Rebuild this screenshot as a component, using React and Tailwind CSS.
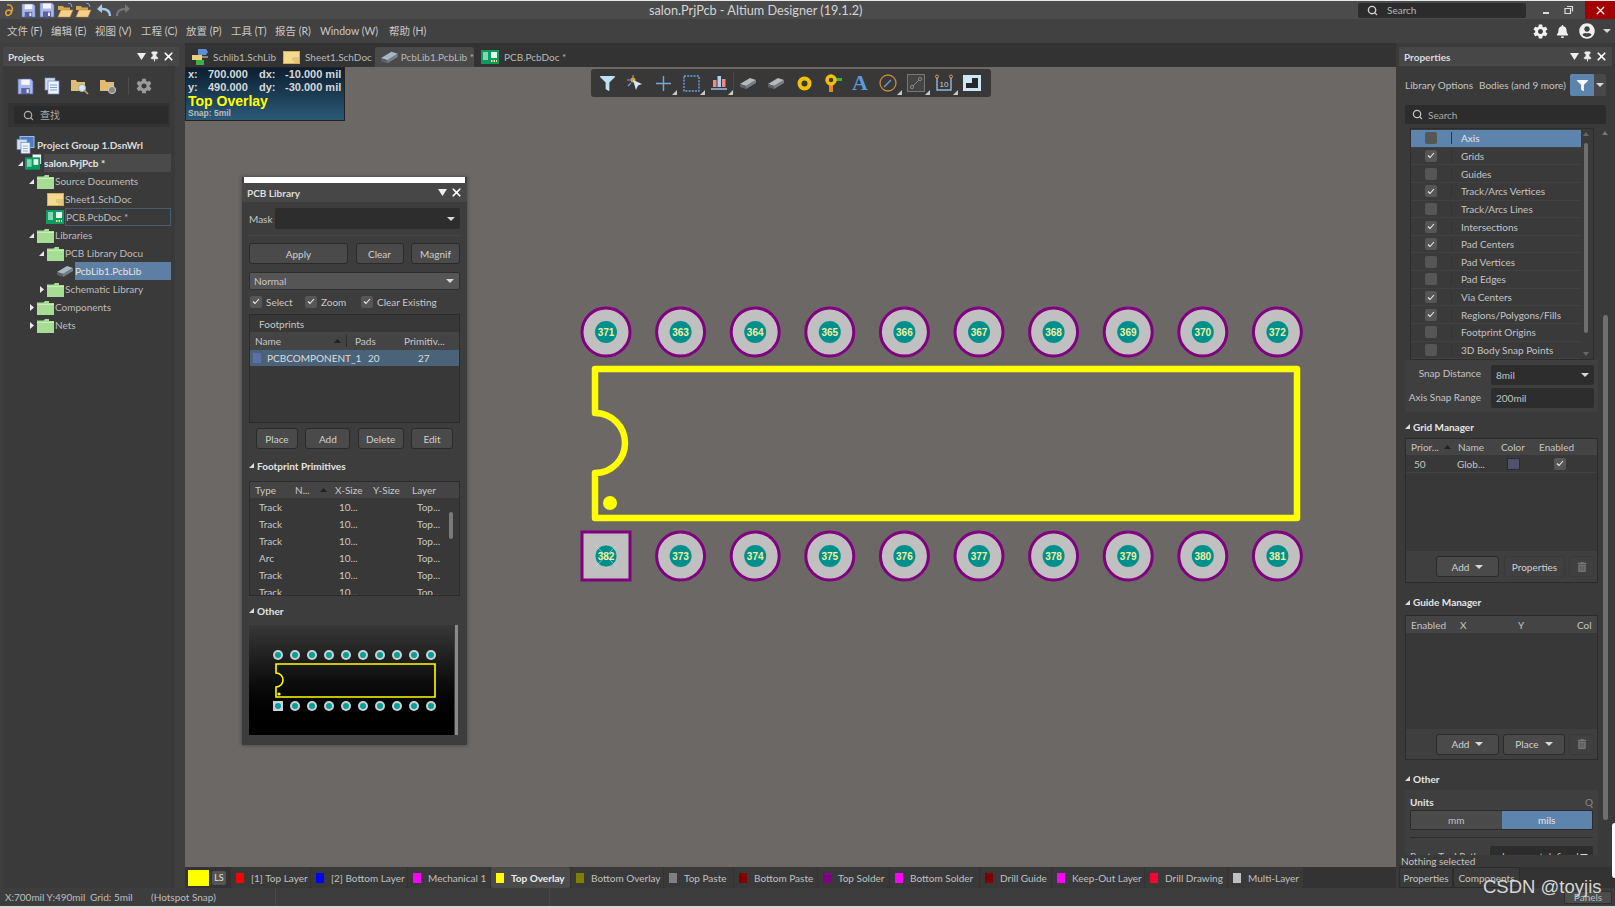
import { Search, X, Pin } from "lucide-react";
import { FaBell, FaFilter, FaTrashAlt, FaUserCircle } from "react-icons/fa";
import { IoMdSettings } from "react-icons/io";

const font = "font-['Lato','Noto_Sans_CJK_SC',sans-serif]";

const menus = [
  ["文件 (F)", "w-[44px]"],
  ["编辑 (E)", "w-[44px]"],
  ["视图 (V)", "w-[46px]"],
  ["工程 (C)", "w-[45px]"],
  ["放置 (P)", "w-[45px]"],
  ["工具 (T)", "w-[44px]"],
  ["报告 (R)", "w-[45px]"],
  ["Window (W)", "w-[69px]"],
  ["帮助 (H)", "w-[50px]"],
];

const layers = [
  ["[1] Top Layer", "bg-[#ff0000]", "w-[79px]"],
  ["[2] Bottom Layer", "bg-[#0000ff]", "w-[96px]"],
  ["Mechanical 1", "bg-[#ff00ff]", "w-[82px]"],
  ["Top Overlay", "bg-[#ffff00]", "w-[79px]"],
  ["Bottom Overlay", "bg-[#808000]", "w-[92px]"],
  ["Top Paste", "bg-[#808080]", "w-[69px]"],
  ["Bottom Paste", "bg-[#800000]", "w-[83px]"],
  ["Top Solder", "bg-[#800080]", "w-[71px]"],
  ["Bottom Solder", "bg-[#ff00ff]", "w-[89px]"],
  ["Drill Guide", "bg-[#800000]", "w-[71px]"],
  ["Keep-Out Layer", "bg-[#ff00ff]", "w-[92px]"],
  ["Drill Drawing", "bg-[#ff0033]", "w-[82px]"],
  ["Multi-Layer", "bg-[#c0c0c0]", "w-[75px]"],
];

const snapRows = [
  ["Axis", false],
  ["Grids", true],
  ["Guides", false],
  ["Track/Arcs Vertices", true],
  ["Track/Arcs Lines", false],
  ["Intersections", true],
  ["Pad Centers", true],
  ["Pad Vertices", false],
  ["Pad Edges", false],
  ["Via Centers", true],
  ["Regions/Polygons/Fills", true],
  ["Footprint Origins", false],
  ["3D Body Snap Points", false],
];

const primitives = ["Track", "Track", "Track", "Arc", "Track", "Track"];
const topPads = [371, 363, 364, 365, 366, 367, 368, 369, 370, 372];
const bottomPads = [382, 373, 374, 375, 376, 377, 378, 379, 380, 381];

function Caret({ className = "" }) {
  return (
    <svg width="8" height="4" viewBox="0 0 8 4" className={className}>
      <path d="M0 0h8L4 4z" fill="#d8d8d8" />
    </svg>
  );
}

function CornerArrow() {
  return (
    <svg width="5" height="5" viewBox="0 0 5 5" className="absolute right-0 bottom-0">
      <path d="M5 0v5H0z" fill="#c8c8c8" />
    </svg>
  );
}

function SortMark() {
  return (
    <svg width="7" height="4" viewBox="0 0 7 4">
      <path d="M0 4h7L3.5 0z" fill="#222" />
    </svg>
  );
}

function Floppy({ size = 16, color = "#aab6ea" }) {
  return (
    <svg width={size} height={size} viewBox="0 0 16 16">
      <path d="M1 1h12l2 2v12H1z" fill={color} stroke="#5f6bb0" strokeWidth="0.6" />
      <rect x="4" y="1.5" width="8" height="5" fill="#f4f5fb" />
      <rect x="4" y="9.5" width="8" height="5.5" fill="#59629c" />
      <rect x="9" y="10.5" width="2" height="3.5" fill="#e6e8f5" />
    </svg>
  );
}

function OpenFolder({ size = 17 }) {
  return (
    <svg width={size} height={size} viewBox="0 0 17 17">
      <path d="M1 4h5l1 1.5h6V8H1z" fill="#d9a94f" />
      <path d="M1 15l3-7h12l-3 7z" fill="#f5d08a" stroke="#b98a3a" strokeWidth="0.5" />
      <path d="M11 1l3 1 1 3" fill="none" stroke="#7aa7d8" strokeWidth="1" />
    </svg>
  );
}

function GreenFolder() {
  return (
    <svg width="17" height="15" viewBox="0 0 17 15">
      <path d="M0 2.5h6.5L8 1h4v2h5v12H0z" fill="#a6dc93" />
      <path d="M0 4.5h17" stroke="#c7eebb" strokeWidth="1" />
    </svg>
  );
}

function SheetIcon({ w = 17, h = 13 }) {
  return (
    <svg width={w} height={h} viewBox="0 0 17 13">
      <rect x="0.5" y="0.5" width="16" height="12" fill="#f6d98c" stroke="#cfae61" />
      <path d="M9 9h7M11 11h5M9 7h7" stroke="#bda35f" strokeWidth="0.7" />
    </svg>
  );
}

function PcbIcon({ w = 18, h = 14 }) {
  return (
    <svg width={w} height={h} viewBox="0 0 18 14">
      <rect width="18" height="14" fill="#0f9a62" />
      <rect x="2" y="2" width="5" height="8" fill="#7fd9b0" />
      <rect x="10" y="2" width="6" height="6" fill="#e6f5ee" />
      <path d="M10 11h6" stroke="#f2e56b" strokeWidth="2" strokeDasharray="1.5 1" />
    </svg>
  );
}

function PrjIcon() {
  return (
    <svg width="19" height="18" viewBox="0 0 19 18">
      <path d="M8 0h9v10H8z" fill="#f0f4fa" />
      <rect y="3" width="16" height="13" fill="#0f9a62" />
      <rect x="2" y="5" width="5" height="8" fill="#7fd9b0" />
      <rect x="9" y="5" width="5" height="6" fill="#e6f5ee" />
    </svg>
  );
}

function GroupIcon() {
  return (
    <svg width="19" height="18" viewBox="0 0 19 18">
      <rect x="4" y="0.5" width="14" height="11" fill="#4c7cc4" stroke="#9dbbe6" />
      <rect x="1" y="3.5" width="10" height="10" fill="#cfdcf0" stroke="#7f95c0" strokeWidth="0.6" />
      <rect x="5" y="6.5" width="9" height="11" fill="#eef3fb" stroke="#6f8cc0" strokeWidth="0.7" />
      <path d="M7 10h5M7 12.5h5M7 15h5" stroke="#7aa0d6" strokeWidth="0.8" />
    </svg>
  );
}

function SchLibIcon() {
  return (
    <svg width="16" height="16" viewBox="0 0 16 16">
      <path d="M6 0h8l2 3-2 3H6z" fill="#5b8fd8" />
      <rect x="0" y="6" width="10" height="5" fill="#e8d27a" />
      <path d="M10 8h6" stroke="#ddd" strokeWidth="1" />
      <rect x="4" y="11" width="8" height="5" fill="#3fae4a" />
    </svg>
  );
}

function ChipIcon({ w = 18, h = 14, color = "#a9b6c4" }) {
  return (
    <svg width={w} height={h} viewBox="0 0 18 14">
      <path d="M1 8l10-6 6 2-10 6z" fill={color} />
      <path d="M1 8l6 2v3l-6-2z" fill="#59616b" />
      <path d="M7 10l10-6v3L7 13z" fill="#767f8a" />
    </svg>
  );
}

function Arrow({ open }) {
  return (
    <svg width="7" height="7" viewBox="0 0 7 7" className="shrink-0">
      {open ? <path d="M6 1v5H1z" fill="#e8e8e8" /> : <path d="M2 0l4 3.5L2 7z" fill="#e8e8e8" />}
    </svg>
  );
}

function Check({ checked, className = "" }) {
  return (
    <span className={`flex h-[12px] w-[12px] shrink-0 items-center justify-center rounded-[2px] bg-[#565656] ${className}`}>
      {checked ? (
        <svg width="8" height="7" viewBox="0 0 8 7">
          <path d="M1 3.5l2 2L7 1" fill="none" stroke="#eee" strokeWidth="1.1" />
        </svg>
      ) : null}
    </span>
  );
}

function Btn({ className = "", children }) {
  return (
    <div className={`flex items-center justify-center gap-[6px] rounded-[3px] border border-[#2a2a2a] bg-[#4a4a4a] text-[#d0d0d0] ${className}`}>
      {children}
    </div>
  );
}

function SectionTitle({ className = "", children }) {
  return (
    <div className={`flex items-center gap-[3px] font-bold text-[#e4e4e4] ${className}`}>
      <svg width="5" height="5" viewBox="0 0 5 5">
        <path d="M5 0v5H0z" fill="#ddd" />
      </svg>
      {children}
    </div>
  );
}

function PanelHead({ title, pin = true, className = "" }) {
  return (
    <div className={`flex h-[19px] items-center bg-[#474747] pr-[4px] pl-[5px] font-bold text-[#dcdcdc] ${className}`}>
      <span className="flex-1">{title}</span>
      <svg width="9" height="7" viewBox="0 0 9 7" className="mr-[3px]">
        <path d="M0 0h9L4.5 7z" fill="#eee" />
      </svg>
      {pin ? <Pin size={11} fill="#eee" color="#eee" className="mr-[2px]" /> : null}
      <X size={13} color="#fff" strokeWidth={3.2} />
    </div>
  );
}

function TitleBar() {
  return (
    <div className="relative flex h-[19px] shrink-0 items-center border-t border-[#e8e8e8] bg-[#4b4b4b]">
      <div className="flex w-[140px] items-center pl-[5px]">
        <svg width="9" height="15" viewBox="0 0 9 15" className="mr-[7px]">
          <path d="M2 2c4-1 6 2 5 6s-5 6-6 3 2-5 5-3" fill="none" stroke="#e0a23a" strokeWidth="1.6" />
        </svg>
        <span className="mr-[3px]"><Floppy size={15} /></span>
        <span className="mr-[2px]"><Floppy size={16} /></span>
        <span className="mr-[1px]"><OpenFolder /></span>
        <span className="mr-[4px]"><OpenFolder /></span>
        <svg width="16" height="14" viewBox="0 0 16 14" className="mr-[3px]">
          <path d="M14 13c0-5-3-7-8-7H3" fill="none" stroke="#a9c8ee" strokeWidth="2.4" />
          <path d="M6 1L1 6l5 4z" fill="#a9c8ee" />
        </svg>
        <svg width="16" height="14" viewBox="0 0 16 14">
          <path d="M2 13c0-5 3-7 8-7h3" fill="none" stroke="#777" strokeWidth="2" />
          <path d="M10 1l5 5-5 4z" fill="#777" />
        </svg>
      </div>
      <div className="absolute left-[649px] text-[12.7px] text-[#d4d4d4]">salon.PrjPcb - Altium Designer (19.1.2)</div>
      <div className="ml-auto flex items-center">
        <div className="flex h-[15px] w-[168px] items-center rounded-[2px] bg-[#2c2c2c] pl-[9px] text-[#b8b8b8]">
          <Search size={11} color="#d0d0d0" strokeWidth={3} className="mr-[9px]" />
          Search
        </div>
        <div className="flex w-[40px] justify-center pt-[5px]">
          <div className="h-[2px] w-[6px] bg-[#ddd]" />
        </div>
        <svg width="10" height="10" viewBox="0 0 10 10" className="mr-[11px] ml-[-2px]">
          <path d="M3 1.5h5.5v5M1 3.5h5.5v5H1z" fill="none" stroke="#ddd" strokeWidth="1.2" />
        </svg>
        <div className="flex h-[18px] w-[30px] items-center justify-center bg-[#a50000]">
          <X size={13} color="#fff" strokeWidth={2.4} />
        </div>
      </div>
    </div>
  );
}

function MenuBar() {
  return (
    <div className="flex h-[24px] shrink-0 items-center bg-[#414141] pl-[7px] text-[10.5px] text-[#c8c8c8]">
      {menus.map(([label, width]) => (
        <span key={label} className={`${width} whitespace-nowrap`}>{label}</span>
      ))}
      <div className="ml-auto flex items-center pr-[4px]">
        <IoMdSettings size={17} color="#f0f0f0" className="mr-[7px]" />
        <FaBell size={13} color="#f0f0f0" className="mr-[10px]" />
        <FaUserCircle size={16} color="#f0f0f0" className="mr-[8px]" />
        <Caret />
      </div>
    </div>
  );
}

function TreeRow({ indent, arrow, icon, label, labelClass = "" }) {
  return (
    <div className={`flex h-[18px] items-center ${indent}`}>
      <span className="flex w-[10px] shrink-0 justify-center">
        {arrow ? <Arrow open={arrow === "open"} /> : null}
      </span>
      <span className="flex w-[18px] shrink-0 justify-center">{icon}</span>
      <span className={`ml-[1px] flex h-full flex-1 items-center overflow-hidden whitespace-nowrap ${labelClass}`}>{label}</span>
    </div>
  );
}

function LeftPanel() {
  return (
    <div className="flex h-full w-[185px] shrink-0 flex-col bg-[#3f3f3f] pt-[4px]">
      <PanelHead title="Projects" className="ml-[3px] w-[176px]" />
      <div className="ml-[3px] flex w-[172px] flex-1 flex-col bg-[#3a3a3a] pt-[10px]">
        <div className="flex h-[20px] items-center gap-[10px] pl-[14px]">
          <Floppy size={17} />
          <svg width="16" height="18" viewBox="0 0 16 18">
            <rect x="1" y="1" width="10" height="12" fill="#cdd9ee" stroke="#7f95c0" strokeWidth="0.6" />
            <rect x="4" y="4" width="11" height="13" fill="#eef3fb" stroke="#6f8cc0" strokeWidth="0.7" />
            <path d="M6 8h7M6 10.5h7M6 13h7" stroke="#7aa0d6" />
          </svg>
          <svg width="19" height="17" viewBox="0 0 19 17">
            <path d="M1 2h5l1 2h8v9H1z" fill="#e3bc74" />
            <circle cx="12" cy="10" r="3.6" fill="#d6e6f4" stroke="#9ab" />
            <path d="M14.5 12.5L18 16" stroke="#c9a35b" strokeWidth="1.6" />
          </svg>
          <svg width="19" height="17" viewBox="0 0 19 17">
            <path d="M1 2h5l1 2h8v9H1z" fill="#e3bc74" />
            <circle cx="13" cy="12" r="3.6" fill="#888" stroke="#ccc" />
          </svg>
          <div className="h-[18px] w-px bg-[#4c4c4c]" />
          <IoMdSettings size={18} color="#9b9b9b" className="-ml-[4px]" />
        </div>
        <div className="mx-[5px] mt-[7px] h-[24px] bg-[#333] pt-[3px] pr-[2px] pl-[6px]">
          <div className="flex h-[18px] items-center rounded-[2px] bg-[#2b2b2b] pl-[9px] text-[#a8a8a8]">
            <Search size={11} color="#b0b0b0" strokeWidth={2.6} className="mr-[6px]" />
            查找
          </div>
        </div>
        <div className="mt-[8px] flex flex-col pr-[4px] text-[#bdbdbd]">
          <div className="flex h-[19px] items-center pl-[13px] font-bold text-[#dcdcdc]">
            <span className="mr-[2px]"><GroupIcon /></span>
            Project Group 1.DsnWrl
          </div>
          <TreeRow indent="pl-[12px]" arrow="open" icon={<PrjIcon />} label="salon.PrjPcb *" labelClass="bg-[#4a4a4a] font-bold text-[#e4e4e4]" />
          <TreeRow indent="pl-[23px]" arrow="open" icon={<GreenFolder />} label="Source Documents" />
          <TreeRow indent="pl-[33px]" icon={<SheetIcon />} label="Sheet1.SchDoc" />
          <TreeRow indent="pl-[33px]" icon={<PcbIcon />} label="PCB.PcbDoc *" labelClass="border border-[#4a5c70]" />
          <TreeRow indent="pl-[23px]" arrow="open" icon={<GreenFolder />} label="Libraries" />
          <TreeRow indent="pl-[33px]" arrow="open" icon={<GreenFolder />} label="PCB Library Docu" />
          <TreeRow indent="pl-[43px]" icon={<ChipIcon />} label="PcbLib1.PcbLib" labelClass="bg-[#5c7fa3] text-[#e4e4e4]" />
          <TreeRow indent="pl-[33px]" arrow="closed" icon={<GreenFolder />} label="Schematic Library" />
          <TreeRow indent="pl-[23px]" arrow="closed" icon={<GreenFolder />} label="Components" />
          <TreeRow indent="pl-[23px]" arrow="closed" icon={<GreenFolder />} label="Nets" />
        </div>
      </div>
    </div>
  );
}

function DocTabs() {
  return (
    <div className="flex h-[24px] shrink-0 items-end whitespace-nowrap bg-[#333] text-[#b8b8b8]">
      <div className="flex h-[20px] w-[97px] items-center pl-[7px]">
        <SchLibIcon />
        <span className="ml-[5px]">Schlib1.SchLib</span>
      </div>
      <div className="flex h-[20px] w-[93px] items-center pl-[1px]">
        <SheetIcon />
        <span className="ml-[5px]">Sheet1.SchDoc</span>
      </div>
      <div className="flex h-[20px] w-[99px] items-center rounded-t-[3px] bg-[#4a4a4a] pl-[5px]">
        <ChipIcon w={20} h={16} />
        <span className="ml-[2px]">PcbLib1.PcbLib *</span>
      </div>
      <div className="flex h-[20px] items-center pl-[7px]">
        <PcbIcon />
        <span className="ml-[5px]">PCB.PcbDoc *</span>
      </div>
    </div>
  );
}

function Hud() {
  return (
    <div className="absolute top-0 left-0 flex h-[54px] w-[160px] flex-col border border-[#222] bg-gradient-to-b from-[#0c1f30] to-[#2c5b78] pl-[2px] font-['Liberation_Sans',sans-serif] font-bold text-[#d8d8d8]">
      <div className="flex h-[13px] items-center text-[11px] leading-none">
        <span className="w-[20px]">x:</span><span className="w-[50px]">700.000</span><span className="w-[27px] pl-[1px]">dx:</span><span>-10.000 mil</span>
      </div>
      <div className="flex h-[12px] items-center text-[11px] leading-none">
        <span className="w-[20px]">y:</span><span className="w-[50px]">490.000</span><span className="w-[27px] pl-[1px]">dy:</span><span>-30.000 mil</span>
      </div>
      <div className="h-[15px] text-[14px] leading-[16px] text-[#ffff00]">Top Overlay</div>
      <div className="text-[8.5px] leading-[10px] text-[#bcbcbc]">Snap: 5mil</div>
    </div>
  );
}

function ToolSlot({ corner, children }) {
  return (
    <div className="relative flex h-[24px] w-[28px] items-center justify-center">
      {children}
      {corner ? <CornerArrow /> : null}
    </div>
  );
}

function Toolbar() {
  return (
    <div className="absolute top-[2px] left-[406px] flex h-[28px] w-[400px] items-center rounded-[3px] bg-[#383838] pl-[2px]">
      <ToolSlot><FaFilter size={15} color="#bfe2f2" /></ToolSlot>
      <ToolSlot>
        <svg width="18" height="18" viewBox="0 0 18 18">
          <circle cx="7" cy="6" r="2.5" fill="#e0a02a" />
          <path d="M1 6h4M7 1v3M2 12l3-3" stroke="#6f9fd8" strokeWidth="1.2" />
          <path d="M7 6l9 4-4 1.5L10 16z" fill="#d6e8f5" />
        </svg>
      </ToolSlot>
      <ToolSlot corner>
        <svg width="15" height="15" viewBox="0 0 15 15">
          <path d="M7.5 0v15M0 7.5h15" stroke="#7aa6de" strokeWidth="1.4" />
        </svg>
      </ToolSlot>
      <ToolSlot corner>
        <svg width="17" height="17" viewBox="0 0 17 17">
          <rect x="1" y="1" width="15" height="15" fill="none" stroke="#6f9fe0" strokeWidth="1.4" strokeDasharray="2 1.2" />
        </svg>
      </ToolSlot>
      <ToolSlot corner>
        <svg width="16" height="16" viewBox="0 0 16 16">
          <rect x="2" y="5" width="3.5" height="7" fill="#f08a80" />
          <rect x="6.5" y="1" width="3.5" height="11" fill="#a9d2f2" />
          <rect x="11" y="4" width="3.5" height="8" fill="#f08a80" />
          <path d="M0 14h16" stroke="#8fb8e0" strokeWidth="1.6" />
        </svg>
      </ToolSlot>
      <div className="h-[22px] w-px bg-[#4b4b4b]" />
      <ToolSlot><ChipIcon w={20} h={14} color="#b8b8b8" /></ToolSlot>
      <ToolSlot><ChipIcon w={20} h={14} color="#b8b8b8" /></ToolSlot>
      <ToolSlot>
        <svg width="15" height="15" viewBox="0 0 15 15">
          <circle cx="7.5" cy="7.5" r="5" fill="none" stroke="#f2c200" strokeWidth="4" />
        </svg>
      </ToolSlot>
      <ToolSlot>
        <svg width="19" height="18" viewBox="0 0 19 18">
          <rect x="6" y="11" width="4" height="7" fill="#e08a28" />
          <rect x="12" y="4" width="7" height="3" fill="#35b544" />
          <circle cx="8" cy="6" r="4" fill="none" stroke="#f2c200" strokeWidth="3.4" />
        </svg>
      </ToolSlot>
      <ToolSlot>
        <span className="font-['Liberation_Serif',serif] text-[22px] leading-none font-bold text-[#5b9ae0]">A</span>
      </ToolSlot>
      <ToolSlot corner>
        <svg width="18" height="18" viewBox="0 0 18 18">
          <circle cx="9" cy="9" r="8" fill="none" stroke="#c98a3c" strokeWidth="1.3" />
          <path d="M5 13l7-7" stroke="#6f9fd8" strokeWidth="1.2" />
        </svg>
      </ToolSlot>
      <ToolSlot corner>
        <svg width="18" height="18" viewBox="0 0 18 18">
          <rect x="0.5" y="0.5" width="17" height="17" fill="#444" stroke="#777" />
          <path d="M5 13l8-8" stroke="#888" strokeWidth="1" />
          <circle cx="5" cy="13" r="1.6" fill="#444" stroke="#888" />
          <circle cx="13" cy="5" r="1.6" fill="#444" stroke="#888" />
        </svg>
      </ToolSlot>
      <ToolSlot corner>
        <svg width="18" height="18" viewBox="0 0 18 18">
          <path d="M2 3v13h14V3" fill="none" stroke="#8fb8e0" strokeWidth="1.4" />
          <circle cx="2" cy="2.5" r="1.5" fill="#383838" stroke="#d9a040" />
          <circle cx="16" cy="2.5" r="1.5" fill="#383838" stroke="#d9a040" />
          <text x="4.5" y="13" fontSize="8" fill="#ccc" fontFamily="Liberation Sans">10</text>
        </svg>
      </ToolSlot>
      <ToolSlot>
        <svg width="18" height="16" viewBox="0 0 18 16">
          <rect width="18" height="16" fill="#cfe7f5" />
          <path d="M3 13V8h6V3h6v10z" fill="#26292c" />
        </svg>
      </ToolSlot>
    </div>
  );
}

function Pad({ x, y, n, square }) {
  return (
    <g>
      {square ? (
        <rect x={x - 24} y={y - 24} width="48" height="48" fill="#c0c0c0" stroke="#800080" strokeWidth="3" />
      ) : (
        <circle cx={x} cy={y} r="24" fill="#c0c0c0" stroke="#800080" strokeWidth="3" />
      )}
      <circle cx={x} cy={y} r="11" fill="#00908c" />
      {square ? (
        <>
          <circle cx={x} cy={y} r="11" fill="none" stroke="#d8d8d8" strokeWidth="0.6" />
          <path d={`M${x - 11} ${y - 11}L${x + 11} ${y + 11}M${x + 11} ${y - 11}L${x - 11} ${y + 11}`} stroke="#d8d8d8" strokeWidth="0.6" />
        </>
      ) : null}
      <text x={x} y={y + 3.5} textAnchor="middle" fontSize="10" fontWeight="700" fontFamily="Liberation Sans" fill="#f2eea0">{n}</text>
    </g>
  );
}

function BoardDrawing() {
  return (
    <svg viewBox="185 67 1211 800" className="block h-full w-full">
      <path
        d="M595 413V369H1297V518H595V473A30 30 0 0 0 595 413Z"
        fill="none"
        stroke="#ffff00"
        strokeWidth="6.5"
        strokeLinejoin="round"
      />
      <circle cx="610" cy="503" r="7" fill="#ffff00" />
      {topPads.map((n, i) => (
        <Pad key={n} x={606 + i * 74.6} y={332} n={n} />
      ))}
      {bottomPads.map((n, i) => (
        <Pad key={n} x={606 + i * 74.6} y={556} n={n} square={i === 0} />
      ))}
    </svg>
  );
}

function FootprintPreview() {
  const xs = [0, 1, 2, 3, 4, 5, 6, 7, 8, 9].map((i) => 29 + i * 17);
  return (
    <svg viewBox="0 0 205 110" className="block h-full w-full">
      {xs.map((x, i) => (
        <g key={x}>
          <circle cx={x} cy="30" r="5" fill="#d0d0d0" />
          <circle cx={x} cy="30" r="3" fill="#00a09a" />
          {i === 0 ? <rect x={x - 5} y="76" width="10" height="10" fill="#d0d0d0" /> : <circle cx={x} cy="81" r="5" fill="#d0d0d0" />}
          <circle cx={x} cy="81" r="3" fill="#00a09a" />
        </g>
      ))}
      <path d="M27 48V39H186V72H27V62A7 7 0 0 0 27 48Z" fill="none" stroke="#ffff00" strokeWidth="1.6" />
      <circle cx="30" cy="69" r="1.6" fill="#ffff00" />
    </svg>
  );
}

function PcbLibraryPanel() {
  return (
    <div className="absolute top-[110px] left-[57px] flex w-[225px] flex-col bg-[#3d3d3d] text-[#c8c8c8] shadow-[0_0_4px_rgba(0,0,0,0.4)]">
      <div className="mx-[2px] h-[6px] bg-white" />
      <PanelHead title="PCB Library" pin={false} />
      <div className="flex flex-col px-[7px]">
        <div className="mt-[6px] flex h-[21px] items-center">
          <span className="w-[26px]">Mask</span>
          <div className="flex h-full flex-1 items-center justify-end rounded-[2px] bg-[#2d2d2d] pr-[5px]"><Caret /></div>
        </div>
        <div className="mt-[6px] h-px bg-[#464646]" />
        <div className="mt-[7px] flex h-[21px] justify-between">
          <Btn className="w-[99px]">Apply</Btn>
          <Btn className="w-[48px]">Clear</Btn>
          <Btn className="w-[49px]">Magnif</Btn>
        </div>
        <div className="mt-[8px] flex h-[18px] items-center justify-between rounded-[2px] border border-[#2e2e2e] bg-[#555] pr-[5px] pl-[4px]">
          Normal
          <Caret />
        </div>
        <div className="mt-[5px] flex h-[13px] items-center">
          <Check checked className="ml-[1px]" />
          <span className="ml-[4px] w-[35px]">Select</span>
          <Check checked className="ml-[4px]" />
          <span className="ml-[4px] w-[36px]">Zoom</span>
          <Check checked className="ml-[4px]" />
          <span className="ml-[4px]">Clear Existing</span>
        </div>
        <div className="mt-[6px] flex h-[109px] flex-col border border-[#2b2b2b] bg-[#383838]">
          <div className="flex h-[17px] shrink-0 items-center pl-[9px]">Footprints</div>
          <div className="flex h-[18px] shrink-0 items-center bg-[#444]">
            <span className="w-[84px] pl-[5px]">Name</span>
            <SortMark />
            <span className="ml-[5px] mr-[8px] h-[12px] w-px bg-[#2b2b2b]" />
            <span className="w-[49px]">Pads</span>
            <span>Primitiv...</span>
          </div>
          <div className="flex h-[16px] shrink-0 items-center bg-[#4a6378] text-[#dcdcdc]">
            <span className="mr-[6px] ml-[3px] h-[10px] w-[8px] shrink-0 bg-[#5c6fa8]" />
            <span className="w-[101px] shrink-0">PCBCOMPONENT_1</span>
            <span className="w-[50px] shrink-0">20</span>
            <span>27</span>
          </div>
        </div>
        <div className="mt-[5px] flex h-[21px] justify-between px-[7px]">
          <Btn className="w-[42px]">Place</Btn>
          <Btn className="w-[45px]">Add</Btn>
          <Btn className="w-[46px]">Delete</Btn>
          <Btn className="w-[42px]">Edit</Btn>
        </div>
        <SectionTitle className="mt-[9px] h-[15px]">Footprint Primitives</SectionTitle>
        <div className="mt-[8px] h-[115px] overflow-hidden border border-[#2b2b2b] bg-[#383838]">
          <div className="flex h-[16px] items-center bg-[#444]">
            <span className="w-[45px] pl-[5px]">Type</span>
            <span className="w-[25px]">N...</span>
            <span className="w-[14px]"><SortMark /></span>
            <span className="w-[39px] pl-[1px]">X-Size</span>
            <span className="w-[39px]">Y-Size</span>
            <span>Layer</span>
          </div>
          <div className="relative">
            {primitives.map((type, i) => (
              <div key={i} className="flex h-[17px] items-center">
                <span className="w-[89px] pl-[9px]">{type}</span>
                <span className="w-[78px]">10...</span>
                <span>Top...</span>
              </div>
            ))}
            <div className="absolute top-[14px] right-[6px] h-[27px] w-[4px] rounded-full bg-[#7a7a7a]" />
          </div>
        </div>
        <SectionTitle className="mt-[7px] h-[15px]">Other</SectionTitle>
        <div className="mt-[7px] mb-[10px] flex h-[110px]">
          <div className="w-[205px] bg-gradient-to-b from-[#383838] to-black">
            <FootprintPreview />
          </div>
          <div className="ml-[1px] h-full w-[3px] bg-[#8a8a8a]" />
        </div>
      </div>
    </div>
  );
}

function LayerBar() {
  return (
    <div className="flex h-[21px] shrink-0 items-center gap-[1px] bg-[#333] pl-[3px] text-[#c0c0c0]">
      <div className="h-[16px] w-[21px] bg-[#ffff00]" />
      <div className="mr-[4px] ml-[2px] flex h-[14px] w-[14px] items-center justify-center rounded-[2px] bg-[#555] text-[9px] text-[#e0e0e0]">LS</div>
      {layers.map(([label, color, width]) => (
        <div
          key={label}
          className={`flex h-full shrink-0 items-center whitespace-nowrap rounded-[2px] pl-[5px] ${width} ${label === "Top Overlay" ? "bg-[#4b4b4b] font-bold text-[#ececec]" : "bg-[#393939]"}`}
        >
          <span className={`mr-[7px] h-[10px] w-[8px] shrink-0 ${color}`} />
          {label}
        </div>
      ))}
    </div>
  );
}

function RightPanel() {
  return (
    <div className="relative flex h-full w-[219px] shrink-0 flex-col bg-[#3a3a3a] pt-[4px] pl-[3px] text-[#c4c4c4]">
      <PanelHead title="Properties" className="mr-[3px]" />
      <div className="h-[789px] overflow-hidden pl-[6px]">
        <div className="mt-[8px] flex h-[22px] w-[201px] items-center whitespace-nowrap">
          <span className="w-[74px] shrink-0">Library Options</span>
          <span className="w-[91px] shrink-0">Bodies (and 9 more)</span>
          <div className="flex h-full w-[24px] items-center justify-center rounded-l-[2px] bg-[#5c84ad]">
            <FaFilter size={11} color="#fff" />
          </div>
          <div className="flex h-full w-[12px] items-center justify-center rounded-r-[2px] bg-[#484848]"><Caret /></div>
        </div>
        <div className="mt-[9px] flex h-[19px] w-[201px] items-center rounded-[2px] bg-[#2c2c2c] pl-[7px] text-[#aaa]">
          <Search size={11} color="#c8c8c8" strokeWidth={2.6} className="mr-[5px]" />
          Search
        </div>
        <div className="relative mt-[4px] ml-[5px] h-[232px] w-[184px] border border-[#2d2d2d] bg-[#3a3a3a] pt-px">
          {snapRows.map(([label, checked], i) => (
            <div key={label} className={`flex h-[17.65px] w-[170px] items-center border-b border-[#414141] ${i === 0 ? "bg-[#5c84ad] text-[#e4e4e4]" : ""}`}>
              <span className="flex w-[41px] justify-center border-r border-[#333]">
                <Check checked={checked} />
              </span>
              <span className="pl-[9px]">{label}</span>
            </div>
          ))}
          <div className="absolute top-[14px] right-[5px] h-[190px] w-[4px] rounded-full bg-[#6f6f6f]" />
          <div className="absolute top-[3px] right-[4px] h-0 w-0 border-x-[3px] border-b-[4px] border-x-transparent border-b-[#666]" />
          <div className="absolute right-[4px] bottom-[3px] h-0 w-0 border-x-[3px] border-t-[4px] border-x-transparent border-t-[#666]" />
        </div>
        <div className="w-[193px] bg-[#3f3f3f] pt-[5px] pb-[4px]">
          <div className="flex h-[20px] items-center">
            <span className="w-[76px] pb-[4px] text-right">Snap Distance</span>
            <div className="ml-[10px] flex h-full w-[103px] items-center justify-between rounded-[2px] bg-[#2d2d2d] pr-[5px] pl-[5px]">
              8mil
              <Caret />
            </div>
          </div>
          <div className="mt-[3px] flex h-[20px] items-center">
            <span className="w-[76px] pb-[2px] text-right whitespace-nowrap">Axis Snap Range</span>
            <div className="ml-[10px] flex h-full w-[103px] items-center rounded-[2px] bg-[#2d2d2d] pl-[5px]">200mil</div>
          </div>
        </div>
        <SectionTitle className="mt-[3px] h-[23px]">Grid Manager</SectionTitle>
        <div className="flex h-[145px] w-[193px] flex-col border border-[#2b2b2b] bg-[#383838]">
          <div className="flex h-[16px] shrink-0 items-center bg-[#444]">
            <span className="w-[38px] pl-[5px]">Prior...</span>
            <span className="w-[13px]"><SortMark /></span>
            <span className="w-[44px] pl-[1px]">Name</span>
            <span className="w-[38px]">Color</span>
            <span>Enabled</span>
          </div>
          <div className="flex h-[18px] shrink-0 items-center border-b border-[#414141]">
            <span className="w-[51px] pl-[8px]">50</span>
            <span className="w-[50px]">Glob...</span>
            <span className="h-[12px] w-[13px] rounded-[1px] border border-[#2b2b2b] bg-[#50506c]" />
            <Check checked className="ml-[34px]" />
          </div>
          <div className="flex-1" />
          <div className="flex h-[31px] shrink-0 items-center bg-[#3f3f3f] pl-[30px]">
            <Btn className="h-[21px] w-[63px]">Add <Caret /></Btn>
            <Btn className="ml-[5px] h-[21px] w-[61px] border-[#3a3a3a] bg-[#404040] text-[#707070]">Properties</Btn>
            <Btn className="ml-[4px] h-[21px] w-[25px] border-[#3a3a3a] bg-[#404040]"><FaTrashAlt size={10} color="#767676" /></Btn>
          </div>
        </div>
        <SectionTitle className="mt-[6px] h-[26px]">Guide Manager</SectionTitle>
        <div className="flex h-[145px] w-[193px] flex-col border border-[#2b2b2b] bg-[#383838]">
          <div className="flex h-[17px] shrink-0 items-center overflow-hidden bg-[#444]">
            <span className="w-[54px] pl-[5px]">Enabled</span>
            <span className="w-[58px]">X</span>
            <span className="w-[59px]">Y</span>
            <span>Col</span>
          </div>
          <div className="flex-1" />
          <div className="flex h-[30px] shrink-0 items-center bg-[#3f3f3f] pl-[30px]">
            <Btn className="h-[21px] w-[63px]">Add <Caret /></Btn>
            <Btn className="ml-[4px] h-[21px] w-[62px]">Place <Caret /></Btn>
            <Btn className="ml-[4px] h-[21px] w-[25px] border-[#3a3a3a] bg-[#404040]"><FaTrashAlt size={10} color="#767676" /></Btn>
          </div>
        </div>
        <SectionTitle className="mt-[7px] h-[23px]">Other</SectionTitle>
        <div className="w-[193px] bg-[#3f3f3f] px-[5px] pt-[3px]">
          <div className="flex h-[17px] items-center justify-between font-bold text-[#e4e4e4]">
            Units
            <span className="font-normal text-[#888]">Q</span>
          </div>
          <div className="flex h-[20px] overflow-hidden rounded-[2px] border border-[#2b2b2b]">
            <span className="flex flex-1 items-center justify-center bg-[#4a4a4a]">mm</span>
            <span className="flex flex-1 items-center justify-center bg-[#5c84ad] text-[#e4e4e4]">mils</span>
          </div>
          <div className="mt-[7px] h-px bg-[#2e2e2e]" />
          <div className="mt-[8px] flex h-[20px] items-center whitespace-nowrap">
            <span className="w-[80px] shrink-0">Route Tool Path</span>
            <div className="flex h-full w-[103px] items-center justify-between rounded-[2px] bg-[#2d2d2d] pr-[5px] pl-[12px]">Layer not defined <Caret /></div>
          </div>
        </div>
      </div>
      <div className="absolute top-[88px] right-[7px] h-0 w-0 border-x-[3px] border-b-[4px] border-x-transparent border-b-[#777]" />
      <div className="absolute top-[272px] right-[7px] h-[505px] w-[5px] rounded-full bg-[#6f6f6f]" />
      <div className="absolute top-[780px] right-0 h-[55px] w-[3px] rounded-l-[3px] bg-white" />
      <div className="ml-[2px] flex h-[12px] items-center">Nothing selected</div>
      <div className="flex h-[21px] bg-[#333]">
        <span className="flex w-[54px] items-center justify-center rounded-[2px] border border-[#2b2b2b] bg-[#3a3a3a]">Properties</span>
        <span className="flex w-[67px] items-center justify-center rounded-[2px] border border-[#2b2b2b] bg-[#3a3a3a]">Components</span>
      </div>
    </div>
  );
}

function StatusBar() {
  return (
    <div className="flex h-[18px] shrink-0 items-center bg-[#3d3d3d] text-[#bdbdbd]">
      <span className="w-[90px] shrink-0 pl-[5px] whitespace-nowrap">X:700mil Y:490mil</span>
      <span className="w-[61px] shrink-0">Grid: 5mil</span>
      <span className="w-[124px] shrink-0">(Hotspot Snap)</span>
      <span className="h-full w-[275px] border-x border-[#484848]" />
      <div className="mr-[3px] ml-auto flex h-[13px] w-[48px] items-center justify-center rounded-[2px] border border-[#2e2e2e] bg-[#4c4c4c]">Panels</div>
    </div>
  );
}

export default function App() {
  return (
    <div className={`relative flex h-[908px] w-[1615px] flex-col overflow-hidden bg-[#333] text-[10px] leading-none text-[#c4c4c4] ${font}`}>
      <TitleBar />
      <MenuBar />
      <div className="flex h-[845px] shrink-0">
        <LeftPanel />
        <div className="flex w-[1211px] shrink-0 flex-col">
          <DocTabs />
          <div className="relative flex-1 overflow-hidden bg-[#6c6866]">
            <BoardDrawing />
            <Hud />
            <Toolbar />
            <PcbLibraryPanel />
          </div>
          <LayerBar />
        </div>
        <RightPanel />
      </div>
      <StatusBar />
      <div className="h-[2px] shrink-0 bg-[#d8d8d8]" />
      <div className="absolute top-[876px] left-[1483px] font-['Liberation_Sans',sans-serif] text-[18.5px] leading-[22px] text-[#d6d6d6]">CSDN @toyjis</div>
    </div>
  );
}
